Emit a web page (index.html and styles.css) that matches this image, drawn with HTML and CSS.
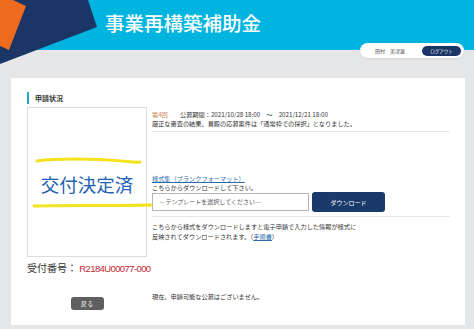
FILE: index.html
```html
<!DOCTYPE html>
<html lang="ja">
<head>
    <meta charset="UTF-8">
    <meta name="viewport" content="width=device-width, initial-scale=1.0">
    <title>事業再構築補助金</title>
    <link rel="stylesheet" href="styles.css">
</head>
<body>
    <header class="site-header">
        <svg class="logo" width="100" height="66" viewBox="0 0 100 66">
            <polygon points="0,0 88,0 97,27 0,64" fill="#1b3566"/>
            <polygon points="0,0 13,0 26,6 9,50 0,46" fill="#ee6a1c"/>
        </svg>
        <h1>事業再構築補助金</h1>
        <div class="user-pill">
            <span class="user-name">田村　美津雄</span>
            <a href="#" class="logout">ログアウト</a>
        </div>
    </header>

    <main class="page">
        <section class="card">
            <h2 class="section-title">申請状況</h2>
            <div class="status-grid">
                <div class="left-col">
                    <div class="status-box">
                        <span class="stamp">交付決定済</span>
                        <svg class="marker" width="130" height="110" viewBox="0 0 130 110">
                            <path d="M9 53 C 30 50, 60 51, 80 52 S 105 55, 112 54" stroke="#f4e21c" stroke-width="3" fill="none" stroke-linecap="round"/>
                            <path d="M6 98 C 40 97, 80 98, 123 97" stroke="#f4e21c" stroke-width="3" fill="none" stroke-linecap="round"/>
                        </svg>
                    </div>
                    <p class="receipt">受付番号： <span class="receipt-no">R2184U00077-000</span></p>
                    <button class="back-btn">戻 る</button>
                </div>

                <div class="right-col">
                    <div class="round-info">
                        <p><span class="round">第4回</span><span class="period">公募期間：2021/10/28 18:00　～　2021/12/21 18:00</span></p>
                        <p>厳正な審査の結果、貴殿の応募案件は「通常枠での採択」となりました。</p>
                    </div>

                    <div class="forms">
                        <p><a href="#" class="link">様式集（ブランクフォーマット）</a></p>
                        <p>こちらからダウンロードして下さい。</p>
                        <div class="download-row">
                            <div class="select">-- テンプレートを選択してください --</div>
                            <button class="download-btn">ダウンロード</button>
                        </div>
                    </div>

                    <p class="note">こちらから様式をダウンロードしますと電子申請で入力した情報が様式に<br>反映されてダウンロードされます。（<a href="#" class="link">手順書</a>）</p>

                    <p class="empty">現在、申請可能な公募はございません。</p>
                </div>
            </div>
        </section>
    </main>
</body>
</html>
```

FILE: styles.css
```css
body {
    margin: 0;
    font-family: "Noto Sans CJK JP", "Noto Sans", sans-serif;
    background-color: #e5e6e8;
    color: #333;
}

p {
    margin: 0;
}

.site-header {
    position: relative;
    height: 50px;
    background-color: #00b4e0;
    padding-left: 105px;
    display: flex;
    align-items: center;
}

.logo {
    position: absolute;
    left: 0;
    top: 0;
}

.site-header h1 {
    margin: 0 0 6px 0;
    font-size: 19.5px;
    font-weight: 500;
    color: white;
}

.user-pill {
    position: absolute;
    right: 10px;
    top: 43px;
    height: 15px;
    width: 104px;
    box-sizing: border-box;
    background-color: white;
    border-radius: 8px;
    display: flex;
    align-items: center;
    justify-content: flex-end;
    padding-right: 3px;
    box-shadow: 0 1px 2px rgba(0, 0, 0, 0.08);
}

.user-name {
    font-size: 5px;
    color: #555;
    margin-right: 17px;
}

.logout {
    background-color: #1b3566;
    color: white;
    font-size: 4.5px;
    text-decoration: none;
    border-radius: 5px;
    width: 39px;
    height: 10px;
    line-height: 10px;
    text-align: center;
}

.page {
    padding: 28px 9px 5px 11px;
}

.card {
    background-color: white;
    padding: 14px 15px 15px 16px;
}

.section-title {
    margin: 0 0 3px 0;
    font-size: 7px;
    font-weight: bold;
    line-height: 12px;
    border-left: 2px solid #1aa8cf;
    padding-left: 6px;
    color: #333;
}

.status-grid {
    display: grid;
    grid-template-columns: 120px 1fr;
    column-gap: 5px;
}

.left-col {
    display: flex;
    flex-direction: column;
}

.status-box {
    position: relative;
    height: 150px;
    border: 1px solid #dcdcdc;
    box-sizing: border-box;
    display: flex;
    justify-content: center;
    align-items: center;
}

.stamp {
    font-size: 18.5px;
    line-height: 20px;
    color: #1f62b4;
    margin-top: 4px;
}

.marker {
    position: absolute;
    left: 0;
    top: 0;
    overflow: visible;
    pointer-events: none;
}

.receipt {
    margin-top: 4px;
    font-size: 10px;
    line-height: 14px;
    white-space: nowrap;
}

.receipt-no {
    color: #c4262e;
    font-family: "Liberation Sans", sans-serif;
    font-size: 9.5px;
    letter-spacing: -0.6px;
}

.back-btn {
    margin: 21px auto 0 auto;
    width: 33px;
    height: 13px;
    border: none;
    border-radius: 3px;
    background-color: #5f5f5f;
    color: white;
    font-family: inherit;
    font-size: 5.5px;
    padding: 0;
}

.right-col {
    font-size: 6.2px;
    line-height: 9px;
}

.round-info {
    margin-top: 2.5px;
    padding-bottom: 3.5px;
    border-bottom: 1px solid #e6e6e6;
}

.round {
    color: #c98556;
    display: inline-block;
    width: 28px;
}

.forms {
    margin-top: 41.5px;
}

.link {
    color: #2e6aa8;
    text-decoration: underline;
}

.download-row {
    display: flex;
    align-items: center;
    margin-top: 0.5px;
    padding-bottom: 4px;
    border-bottom: 1px solid #e6e6e6;
}

.select {
    width: 157px;
    height: 18px;
    box-sizing: border-box;
    border: 1px solid #b5b5b5;
    padding-left: 7px;
    line-height: 16px;
    color: #555;
    font-size: 6px;
}

.download-btn {
    margin-left: 3px;
    width: 73px;
    height: 20px;
    border: none;
    border-radius: 3px;
    background-color: #1b3a6c;
    color: white;
    font-family: inherit;
    font-size: 6px;
    padding: 0;
}

.note {
    margin-top: 5px;
    line-height: 10px;
}

.empty {
    margin-top: 50px;
}
```
